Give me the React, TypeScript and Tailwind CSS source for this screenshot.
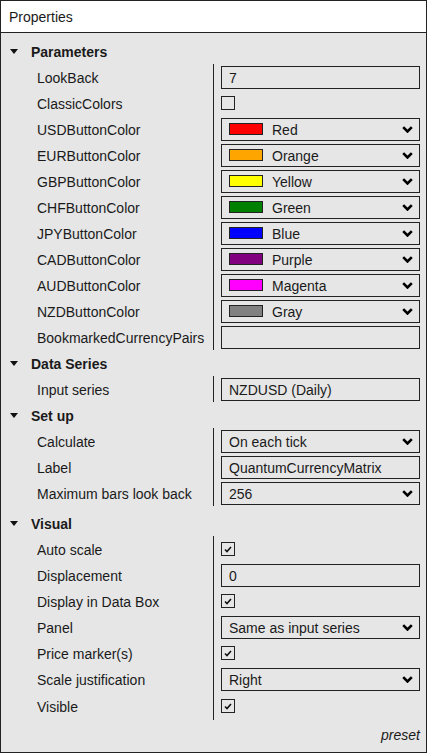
import React from "react";

type Field =
  | { kind: "text"; label: string; value: string }
  | { kind: "check"; label: string; checked: boolean }
  | { kind: "color"; label: string; swatch: string; value: string }
  | { kind: "select"; label: string; value: string };

interface Section {
  title: string;
  extraTop?: string;
  fields: Field[];
}

const sections: Section[] = [
  {
    title: "Parameters",
    fields: [
      { kind: "text", label: "LookBack", value: "7" },
      { kind: "check", label: "ClassicColors", checked: false },
      { kind: "color", label: "USDButtonColor", swatch: "bg-[#ff0000]", value: "Red" },
      { kind: "color", label: "EURButtonColor", swatch: "bg-[#ffa500]", value: "Orange" },
      { kind: "color", label: "GBPButtonColor", swatch: "bg-[#ffff00]", value: "Yellow" },
      { kind: "color", label: "CHFButtonColor", swatch: "bg-[#008000]", value: "Green" },
      { kind: "color", label: "JPYButtonColor", swatch: "bg-[#0000ff]", value: "Blue" },
      { kind: "color", label: "CADButtonColor", swatch: "bg-[#800080]", value: "Purple" },
      { kind: "color", label: "AUDButtonColor", swatch: "bg-[#ff00ff]", value: "Magenta" },
      { kind: "color", label: "NZDButtonColor", swatch: "bg-[#808080]", value: "Gray" },
      { kind: "text", label: "BookmarkedCurrencyPairs", value: "" },
    ],
  },
  {
    title: "Data Series",
    fields: [{ kind: "text", label: "Input series", value: "NZDUSD (Daily)" }],
  },
  {
    title: "Set up",
    fields: [
      { kind: "select", label: "Calculate", value: "On each tick" },
      { kind: "text", label: "Label", value: "QuantumCurrencyMatrix" },
      { kind: "select", label: "Maximum bars look back", value: "256" },
    ],
  },
  {
    title: "Visual",
    extraTop: "mt-[4px]",
    fields: [
      { kind: "check", label: "Auto scale", checked: true },
      { kind: "text", label: "Displacement", value: "0" },
      { kind: "check", label: "Display in Data Box", checked: true },
      { kind: "select", label: "Panel", value: "Same as input series" },
      { kind: "check", label: "Price marker(s)", checked: true },
      { kind: "select", label: "Scale justification", value: "Right" },
      { kind: "check", label: "Visible", checked: true },
    ],
  },
];

function Chevron() {
  return (
    <svg width="11" height="7" viewBox="0 0 11 7" className="shrink-0 -mt-[2px]">
      <path d="M1.2 1.2 L5.5 5.5 L9.8 1.2" fill="none" stroke="#000" strokeWidth="2.6" />
    </svg>
  );
}

function Box({ children }: { children?: React.ReactNode }) {
  return (
    <div className="w-[199px] h-[23px] border border-[#222] flex items-center pt-[2px] pl-[7px] pr-[6px] text-[#1a1a1a]">
      {children}
    </div>
  );
}

function Value({ field }: { field: Field }) {
  if (field.kind === "check") {
    return (
      <div className="w-[14px] h-[14px] border border-[#222] flex items-center justify-center">
        {field.checked && (
          <svg width="8" height="7" viewBox="0 0 8 7">
            <path d="M1 3.5 L3 5.5 L7 1" fill="none" stroke="#111" strokeWidth="1.6" />
          </svg>
        )}
      </div>
    );
  }
  if (field.kind === "color") {
    return (
      <Box>
        <div className={`w-[34px] h-[12px] -mt-[2px] border border-[#222] ${field.swatch}`} />
        <span className="ml-[9px] flex-1">{field.value}</span>
        <Chevron />
      </Box>
    );
  }
  if (field.kind === "select") {
    return (
      <Box>
        <span className="flex-1">{field.value}</span>
        <Chevron />
      </Box>
    );
  }
  return (
    <Box>
      <span>{field.value}</span>
    </Box>
  );
}

export default function App() {
  return (
    <div className="w-[429px] h-[756px] bg-white font-['Liberation_Sans',Arial,sans-serif] text-[14px] text-[#1a1a1a]">
      <div className="w-[427px] h-[753px] border border-[#222] bg-[#e6e6e6] flex flex-col">
        {/* title bar */}
        <div className="h-[32px] bg-white border-b border-[#222] flex items-center pt-[2px] pl-[8px] shrink-0">
          Properties
        </div>

        <div className="flex-1 flex flex-col pt-[5px]">
          {sections.map((s) => (
            <div key={s.title} className={s.extraTop}>
              <div className="h-[26px] flex items-center pt-[2px] pl-[9px]">
                <svg width="8" height="5" viewBox="0 0 8 5" className="shrink-0 -mt-[1px]">
                  <polygon points="0,0 8,0 4,5" fill="#111" />
                </svg>
                <span className="ml-[13px] font-bold">{s.title}</span>
              </div>
              {s.fields.map((f, i) => (
                <div
                  key={f.label}
                  className={`flex items-stretch ${
                    s.title === "Visual" && i === s.fields.length - 1 ? "h-[28px]" : "h-[26px]"
                  }`}
                >
                  <div className="w-[212px] pl-[36px] pt-[2px] flex items-center whitespace-nowrap">
                    {f.label}
                  </div>
                  <div className="flex-1 border-l border-[#222] pl-[7px] flex items-center">
                    <Value field={f} />
                  </div>
                </div>
              ))}
            </div>
          ))}
        </div>

        <div className="text-right pr-[6px] pb-[6px] italic">preset</div>
      </div>
    </div>
  );
}
